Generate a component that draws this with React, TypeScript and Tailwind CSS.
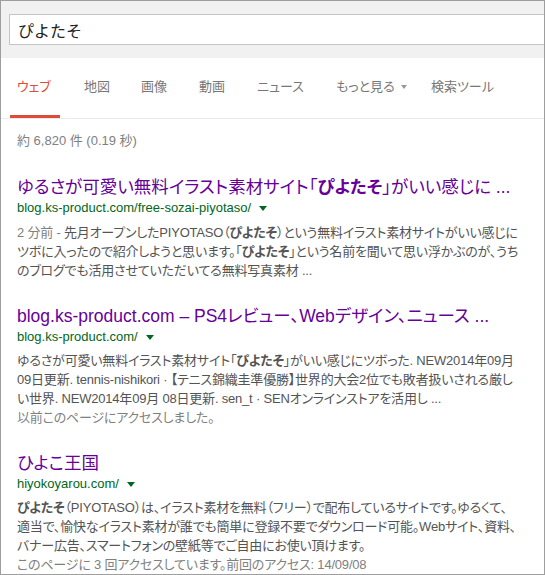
import React from "react";

const font = "font-['Liberation_Sans','Noto_Sans_CJK_JP',sans-serif] [font-feature-settings:'palt']";

function Tri({ color }: { color: string }) {
  return (
    <span
      className={`inline-block ml-[8px] align-middle w-0 h-0 border-l-[4px] border-r-[4px] border-t-[5px] border-l-transparent border-r-transparent ${color}`}
    />
  );
}

function Title({ children }: { children: React.ReactNode }) {
  return <div className="text-[17.5px] leading-[22px] text-[#660099] whitespace-nowrap">{children}</div>;
}

function Url({ children }: { children: React.ReactNode }) {
  return (
    <div className="text-[13px] leading-[20px] text-[#006621] whitespace-nowrap flex items-center">
      <span>{children}</span>
      <Tri color="border-t-[#006621]" />
    </div>
  );
}

function Line({ children, gray }: { children: React.ReactNode; gray?: boolean }) {
  return (
    <div
      className={`text-[13px] leading-[19px] tracking-[-0.2px] whitespace-nowrap ${
        gray ? "text-[#808080]" : "text-[#545454]"
      }`}
    >
      {children}
    </div>
  );
}

const tabs = [
  { label: "ウェブ", w: "w-[67px]", active: true },
  { label: "地図", w: "w-[57px]" },
  { label: "画像", w: "w-[58px]" },
  { label: "動画", w: "w-[58px]" },
  { label: "ニュース", w: "w-[79px]" },
  { label: "もっと見る", w: "w-[95px]", arrow: true },
  { label: "検索ツール", w: "w-[80px]" },
];

export default function App() {
  return (
    <div className={`w-[545px] h-[575px] border border-[#9e9e9e] bg-white overflow-hidden ${font}`}>
      <div className="h-[57px] bg-[#f1f1f1] pt-[13px] pl-[8px]">
        <div className="h-[31px] bg-white border border-r-0 border-[#c4c4c4] flex items-center pl-[8px] text-[16px] text-[#222] font-['Noto_Sans_CJK_JP',sans-serif] [font-feature-settings:normal]">
          ぴよたそ
        </div>
      </div>
      <div className="h-[61px] border-b border-[#ebebeb] flex pl-[16px]">
        {tabs.map((t) => (
          <div key={t.label} className={`relative ${t.w} h-full pt-[19px]`}>
            <div
              className={`flex items-center text-[13px] leading-[20px] whitespace-nowrap ${
                t.active ? "text-[#dd4b39]" : "text-[#777777]"
              }`}
            >
              {t.label}
              {t.arrow && (
                <span className="inline-block ml-[6px] w-0 h-0 border-l-[3.5px] border-r-[3.5px] border-t-[4px] border-l-transparent border-r-transparent border-t-[#999999]" />
              )}
            </div>
            {t.active && <div className="absolute left-[-7px] bottom-0 w-[50px] h-[3px] bg-[#dd4b39]" />}
          </div>
        ))}
      </div>
      <div className="pl-[16px]">
        <div className="mt-[12px] text-[13px] leading-[20px] text-[#808080] whitespace-nowrap">
          約 6,820 件 (0.19 秒)
        </div>

        <div className="mt-[25px]">
          <Title>
            ゆるさが可愛い無料イラスト素材サイト「<b>ぴよたそ</b>」がいい感じに ...
          </Title>
          <Url>blog.ks-product.com/free-sozai-piyotaso/</Url>
          <div className="mt-[5px]">
            <Line>
              <span className="text-[#808080]">2 分前 - </span>先月オープンしたPIYOTASO（<b>ぴよたそ</b>）という無料イラスト素材サイトがいい感じに
            </Line>
            <Line>
              ツボに入ったので紹介しようと思います。「<b>ぴよたそ</b>」という名前を聞いて思い浮かぶのが、うち
            </Line>
            <Line>のブログでも活用させていただいてる無料写真素材 ...</Line>
          </div>
        </div>

        <div className="mt-[25px]">
          <Title>blog.ks-product.com – PS4レビュー、Webデザイン、ニュース ...</Title>
          <Url>blog.ks-product.com/</Url>
          <div className="mt-[4px]">
            <Line>
              ゆるさが可愛い無料イラスト素材サイト「<b>ぴよたそ</b>」がいい感じにツボった. NEW2014年09月
            </Line>
            <Line>09日更新. tennis-nishikori · 【テニス錦織圭準優勝】世界的大会2位でも敗者扱いされる厳し</Line>
            <Line>い世界. NEW2014年09月 08日更新. sen_t · SENオンラインストアを活用し ...</Line>
            <Line gray>以前このページにアクセスしました。</Line>
          </div>
        </div>

        <div className="mt-[25px]">
          <Title>ひよこ王国</Title>
          <Url>hiyokoyarou.com/</Url>
          <div className="mt-[4px]">
            <Line>
              <b>ぴよたそ</b>（PIYOTASO）は、イラスト素材を無料（フリー）で配布しているサイトです。ゆるくて、
            </Line>
            <Line>適当で、愉快なイラスト素材が誰でも簡単に登録不要でダウンロード可能。Webサイト、資料、</Line>
            <Line>バナー広告、スマートフォンの壁紙等でご自由にお使い頂けます。</Line>
            <Line gray>このページに 3 回アクセスしています。前回のアクセス: 14/09/08</Line>
          </div>
        </div>
      </div>
    </div>
  );
}
